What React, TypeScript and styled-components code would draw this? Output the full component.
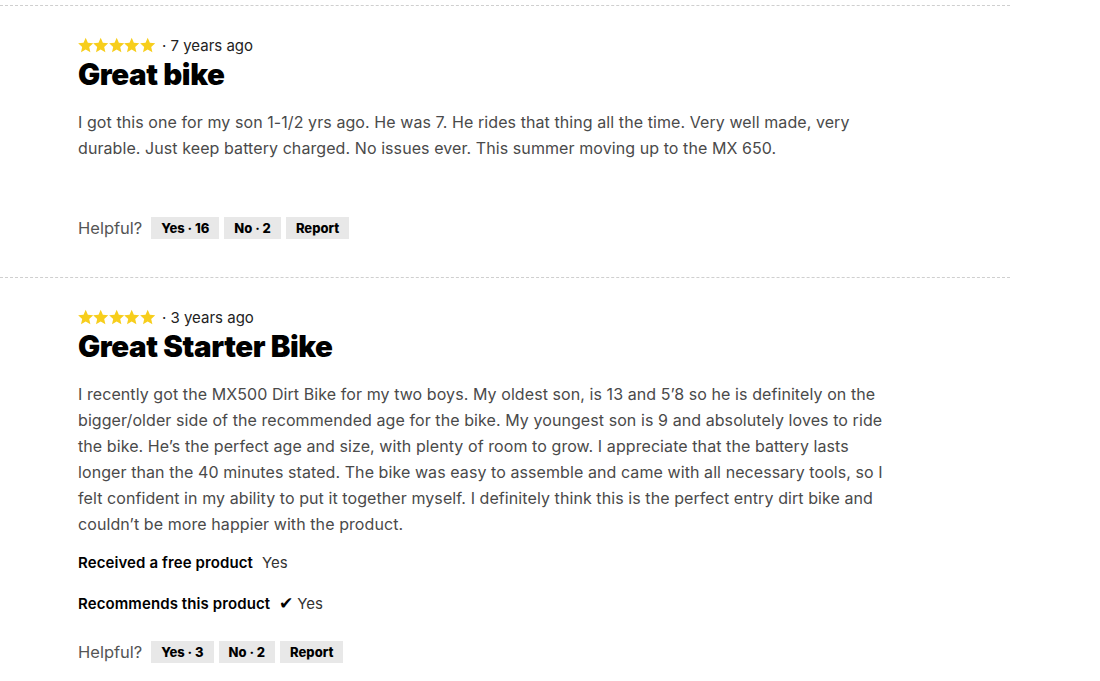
import React from "react";
import styled, { createGlobalStyle } from "styled-components";

const Global = createGlobalStyle`
  html, body { margin: 0; padding: 0; background: #fff; }
  body { font-family: "Inter", "Lato", sans-serif; color: #111; }
`;

const List = styled.div`
  width: 1010px;
  padding-top: 5px;
`;

const Review = styled.article<{ h: number }>`
  border-top: 1px dashed #cfcfcf;
  padding: 30px 0 0 78px;
  height: ${(p) => p.h}px;
  box-sizing: border-box;
`;

const Meta = styled.div`
  display: flex;
  align-items: center;
  gap: 7px;
  height: 18px;
  font-size: 15px;
  color: #222;
`;

const Stars = styled.div`
  display: flex;
`;

const Title = styled.h2`
  margin: 3px 0 0;
  font-size: 29.5px;
  line-height: 34px;
  font-weight: 900;
  color: #000;
  letter-spacing: -0.4px;
`;

const Body = styled.p`
  margin: 18px 0 0;
  max-width: 822px;
  font-size: 16px;
  line-height: 26px;
  letter-spacing: 0.08px;
  color: #4a4a4a;
`;

const Prop = styled.div<{ mt: number }>`
  margin-top: ${(p) => p.mt}px;
  display: flex;
  align-items: center;
  gap: 9px;
  font-size: 15px;
  line-height: 22px;
  color: #000;
`;

const PropLabel = styled.span`
  font-weight: 600;
  letter-spacing: 0.1px;
`;

const PropValue = styled.span`
  color: #333;
`;

const Check = styled.span`
  color: #000;
  font-size: 17px;
  margin-right: 4px;
`;

const Helpful = styled.div<{ mt: number }>`
  margin-top: ${(p) => p.mt}px;
  display: flex;
  align-items: center;
  gap: 5px;
`;

const HelpLabel = styled.span`
  font-size: 16.5px;
  color: #555;
  margin-right: 4px;
`;

const Btn = styled.button`
  border: none;
  background: #e8e8e8;
  height: 22px;
  padding: 0 10px;
  font-family: inherit;
  font-size: 13px;
  font-weight: 800;
  color: #000;
  cursor: pointer;
`;

const Star = () => (
  <svg width="15.4" height="16" viewBox="1 1.2 22 21">
    <path
      fill="#f7ce1c"
      d="M12 1.5l3.1 7.1 7.7.7-5.8 5.1 1.7 7.6L12 18l-6.7 4 1.7-7.6-5.8-5.1 7.7-.7z"
    />
  </svg>
);

const StarRow = () => (
  <Stars>
    {[0, 1, 2, 3, 4].map((i) => (
      <Star key={i} />
    ))}
  </Stars>
);

export default function App() {
  return (
    <>
      <Global />
      <List>
        <Review h={272}>
          <Meta>
            <StarRow />
            <span>· 7 years ago</span>
          </Meta>
          <Title>Great bike</Title>
          <Body>
            I got this one for my son 1-1/2 yrs ago. He was 7. He rides that thing all the time. Very well made, very
            durable. Just keep battery charged. No issues ever. This summer moving up to the MX 650.
          </Body>
          <Helpful mt={56}>
            <HelpLabel>Helpful?</HelpLabel>
            <Btn>Yes · 16</Btn>
            <Btn>No · 2</Btn>
            <Btn>Report</Btn>
          </Helpful>
        </Review>
        <Review h={404}>
          <Meta>
            <StarRow />
            <span>· 3 years ago</span>
          </Meta>
          <Title>Great Starter Bike</Title>
          <Body>
            I recently got the MX500 Dirt Bike for my two boys. My oldest son, is 13 and 5’8 so he is definitely on the
            bigger/older side of the recommended age for the bike. My youngest son is 9 and absolutely loves to ride
            the bike. He’s the perfect age and size, with plenty of room to grow. I appreciate that the battery lasts
            longer than the 40 minutes stated. The bike was easy to assemble and came with all necessary tools, so I
            felt confident in my ability to put it together myself. I definitely think this is the perfect entry dirt bike and
            couldn’t be more happier with the product.
          </Body>
          <Prop mt={15}>
            <PropLabel>Received a free product</PropLabel>
            <PropValue>Yes</PropValue>
          </Prop>
          <Prop mt={18}>
            <PropLabel>Recommends this product</PropLabel>
            <PropValue>
              <Check>✔</Check>Yes
            </PropValue>
          </Prop>
          <Helpful mt={26}>
            <HelpLabel>Helpful?</HelpLabel>
            <Btn>Yes · 3</Btn>
            <Btn>No · 2</Btn>
            <Btn>Report</Btn>
          </Helpful>
        </Review>
      </List>
    </>
  );
}
